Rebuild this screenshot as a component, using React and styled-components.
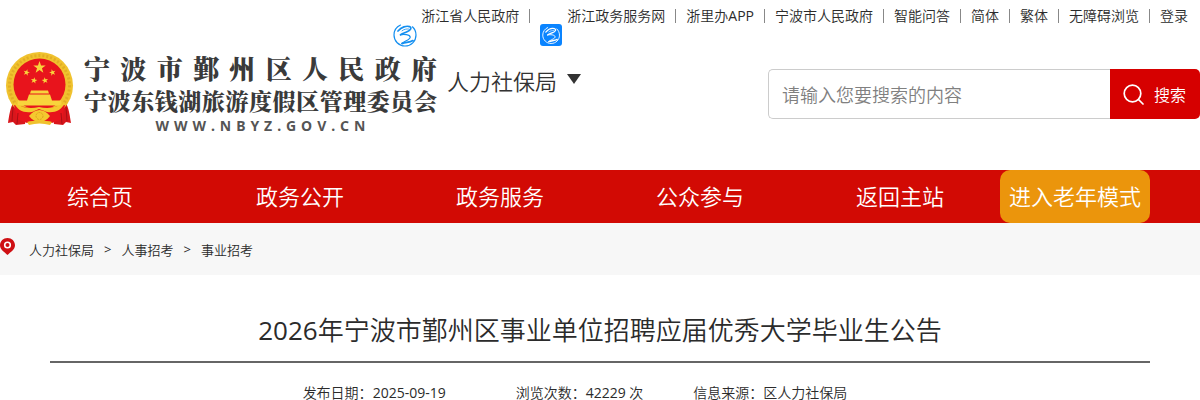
import React from 'react';
import styled, { createGlobalStyle } from 'styled-components';

const GlobalStyle = createGlobalStyle`
    * {
        box-sizing:border-box;
    }
    body {
        margin:0;
        background:#fff;
        color:#2b2b2b;
        font-family:"Open Sans", "Noto Sans CJK SC", sans-serif;
        font-size:14px;
        font-weight:350;
    }
    a {
        color:inherit;
        text-decoration:none;
    }
`;

const TopBar = styled.nav`
    display:flex;
    justify-content:flex-end;
    align-items:flex-start;
    height:47px;
    padding-right:12px;
`;

const TopLink = styled.a`
    display:flex;
    align-items:flex-start;
    line-height:32px;
    white-space:nowrap;
`;

const Divider = styled.span`
    width:1px;
    height:14px;
    margin:9px 10px 0;
    background:#888;
`;

const TopIcon = styled.svg`
    width:${props => props.$size}px;
    height:${props => props.$size}px;
    margin:23px 4px 0 0;
    flex:none;
`;

const Header = styled.header`
    display:flex;
    align-items:flex-start;
    height:123px;
`;

const LogoLink = styled.a`
    display:flex;
    align-items:flex-start;
    padding:4px 0 0 5px;
`;

const EmblemSvg = styled.svg`
    width:69px;
    height:76px;
    margin-right:10px;
`;

const LogoText = styled.span`
    display:flex;
    flex-direction:column;
    width:353px;
    font-family:"Noto Serif CJK SC", "Noto Sans CJK SC", serif;
    font-weight:900;
    color:#3a3a3a;
`;

const LogoRow = styled.span`
    display:flex;
    justify-content:space-between;
    font-size:${props => props.$size}px;
    line-height:${props => props.$line}px;
`;

const LogoSite = styled(LogoRow)`
    width:210px;
    margin:0 auto;
    font-family:"Noto Sans", sans-serif;
    font-weight:700;
    color:#555;
`;

const Department = styled.button`
    display:flex;
    align-items:center;
    gap:10px;
    margin-top:18px;
    padding:0 0 0 10px;
    border:0;
    background:none;
    color:#333;
    font:inherit;
    font-size:22px;
    line-height:32px;
    white-space:nowrap;
`;

const Caret = styled.span`
    border-left:7px solid transparent;
    border-right:7px solid transparent;
    border-top:10px solid #333;
    margin-bottom:4px;
`;

const SearchForm = styled.form`
    display:flex;
    width:36%;
    height:50px;
    margin:22px 0 0 auto;
`;

const SearchInput = styled.input`
    flex:1;
    min-width:0;
    padding:2px 13px 0;
    border:1px solid #ccc;
    border-right:0;
    border-radius:5px 0 0 5px;
    outline:none;
    font:inherit;
    font-size:18px;
    &::placeholder {
        color:#808080;
    }
`;

const SearchButton = styled.button`
    display:flex;
    align-items:center;
    gap:10px;
    padding:0 14px 0 13px;
    border:0;
    border-radius:0 5px 5px 0;
    background:#d60000;
    color:#fff;
    font:inherit;
    font-size:16px;
    white-space:nowrap;
`;

const MainNav = styled.nav`
    display:grid;
    grid-template-columns:repeat(6, 1fr);
    height:53px;
    background:#d20a04;
    color:#fff;
    font-size:22px;
    line-height:53px;
`;

const NavLink = styled.a`
    text-align:center;
    white-space:nowrap;
`;

const ElderButton = styled.button`
    justify-self:start;
    padding:0 9px;
    border:0;
    border-radius:10px;
    background:#eb950c;
    color:#fff;
    font:inherit;
    white-space:nowrap;
`;

const Breadcrumb = styled.nav`
    display:flex;
    align-items:center;
    gap:10px;
    height:52px;
    background:#f7f7f7;
    font-size:13px;
`;

const PinIcon = styled.svg`
    width:15px;
    height:17px;
    margin:0 4px 6px 0;
`;

const Article = styled.main`
    padding:36px 50px 0;
`;

const ArticleTitle = styled.h1`
    margin:0;
    padding-bottom:12px;
    border-bottom:2px solid #666;
    font-size:26px;
    font-weight:350;
    line-height:38px;
    text-align:center;
`;

const Latin = styled.span`
    font-weight:400;
`;

const Meta = styled.div`
    display:flex;
    justify-content:center;
    padding-top:23px;
    line-height:14px;
    white-space:nowrap;
`;

const MetaItem = styled.span`
    margin-right:${props => props.$wide ? 70 : 50}px;
`;

const topLinks = [
    { text: '浙江省人民政府', icon: 'round' },
    { text: '浙江政务服务网', icon: 'square' },
    { text: '浙里办', latin: 'APP' },
    { text: '宁波市人民政府' },
    { text: '智能问答' },
    { text: '简体' },
    { text: '繁体' },
    { text: '无障碍浏览' },
    { text: '登录' },
];

const navLinks = ['综合页', '政务公开', '政务服务', '公众参与', '返回主站'];

const crumbs = ['人力社保局', '人事招考', '事业招考'];

const star = (cx, cy, r, turn = 0) => {
    const points = [];
    for (let i = 0; i < 10; i++) {
        const a = (i * 36 - 90 + turn) * Math.PI / 180;
        const d = i % 2 ? r * 0.4 : r;
        points.push(`${(cx + d * Math.cos(a)).toFixed(2)},${(cy + d * Math.sin(a)).toFixed(2)}`);
    }
    return points.join(' ');
};

const Swirl = () => (
    <g fill="none" stroke="currentColor" strokeLinecap="round">
        <path d="M7.500 2C3.600 3.800 1 7.600 1 12c0 6 4.800 11 11 11s11-4.800 11-11c0-3.400-1.400-6.200-3.600-8.200" strokeWidth="1.200" />
        <path d="M5 8C8.500 4 13.500 2.600 16.500 3.600c3 1.400.5 4-2.500 5.200-3 1.200-5.500 1.600-6.500 3" strokeWidth="1.700" />
        <path d="M9 7.800c2-1.600 4.500-2 6.500-1.800" strokeWidth=".8" />
        <path d="M7.500 11.800c3-.8 9.500-.4 9.700 2.300.2 2.600-5 3.500-8.200 6.200" strokeWidth="1.200" />
        <path d="M9 20.600c3.600-1.600 7.400-.8 11-3" strokeWidth="1.800" />
    </g>
);

const GovIcon = ({ type }) => {
    if (type === 'round') {
        return (
            <TopIcon $size={24} viewBox="0 0 24 24" color="#148ff0">
                <Swirl />
            </TopIcon>
        );
    }
    return (
        <TopIcon $size={23} viewBox="0 0 23 23" color="#fff">
            <rect y="1" width="22" height="22" rx="3" fill="#0a84ff" />
            <g transform="translate(2 3) scale(.76)"><Swirl /></g>
        </TopIcon>
    );
};

const Emblem = () => (
    <EmblemSvg viewBox="0 0 69 76">
        <path d="M9 51C5 56 4 66 3 72l5-1 3 3 9-1 2-14zM60 51c4 5 5 15 6 21l-5-1-3 3-9-1-2-14z" fill="#d9161c" />
        <circle cx="34.500" cy="34.500" r="33.500" fill="#f0c22e" />
        <circle cx="34.500" cy="34.500" r="30" fill="none" stroke="#e2ae24" strokeWidth="3" strokeDasharray="2 2" />
        <circle cx="34.500" cy="33.500" r="26" fill="#e8141c" />
        <g fill="#f8d43c">
            <polygon points={star(34.5, 16.5, 6.5)} />
            <polygon points={star(21.5, 21.5, 3.4, 15)} />
            <polygon points={star(47.5, 21.5, 3.4, -15)} />
            <polygon points={star(29, 29.5, 3.4, 10)} />
            <polygon points={star(40, 29.5, 3.4, -10)} />
            <path d="M26 39.500h17l1 3H25zM24 43.500h21l2 6h9l1 5H12l1-5h9z" />
        </g>
        <path d="M9 54c16 4 35 4 51 0l-3 14-10 4H22l-10-4z" fill="#e8141c" />
        <path d="M9 51c7 6 16 7 25 5 9 2 18 1 26-5-3 9-11 11-18 10l-8-3-7 3c-8 1-15-1-18-10z" fill="#f4c92f" />
        <path d="M24 65c3-4 7-6 10.500-6S42 61 45 65c-3 4-7 6-10.500 6S27 69 24 65z" fill="#f4c92f" />
        <circle cx="34.500" cy="65" r="3.500" fill="none" stroke="#dca51f" strokeWidth="1" strokeDasharray="2 1" />
        <path d="M22 71c6-2 19-2 25 0l-2 3c-7-2-14-2-21 0z" fill="#f0c22e" />
        <path d="M8 56l-1 14M13 62l-1 11M61 56l1 14M56 62l1 11" stroke="#a90f15" strokeWidth="1" />
    </EmblemSvg>
);

const SpreadText = ({ text }) => [...text].map((char, i) => <span key={i}>{char}</span>);

const Logo = () => (
    <LogoLink href="#">
        <Emblem />
        <LogoText>
            <LogoRow $size={26} $line={34}>
                <SpreadText text="宁波市鄞州区人民政府" />
            </LogoRow>
            <LogoRow $size={23} $line={32}>
                <SpreadText text="宁波东钱湖旅游度假区管理委员会" />
            </LogoRow>
            <LogoSite $size={14} $line={18}>
                <SpreadText text="WWW.NBYZ.GOV.CN" />
            </LogoSite>
        </LogoText>
    </LogoLink>
);

const App = () => {
    return (
        <>
            <GlobalStyle />
            <TopBar>
                {topLinks.map((link, i) => (
                    <React.Fragment key={link.text}>
                        {i > 0 && <Divider />}
                        <TopLink href="#">
                            {link.icon && <GovIcon type={link.icon} />}
                            {link.text}
                            {link.latin && <Latin>{link.latin}</Latin>}
                        </TopLink>
                    </React.Fragment>
                ))}
            </TopBar>
            <Header>
                <Logo />
                <Department type="button">
                    人力社保局
                    <Caret />
                </Department>
                <SearchForm>
                    <SearchInput type="text" aria-label="搜索内容" placeholder="请输入您要搜索的内容" />
                    <SearchButton type="submit">
                        <svg width="21" height="21" viewBox="0 0 21 21" fill="none" stroke="#fff" strokeWidth="1.700" strokeLinecap="round">
                            <circle cx="9.500" cy="9.500" r="8.300" />
                            <path d="M15.500 15.500l4.500 4.500" />
                        </svg>
                        搜索
                    </SearchButton>
                </SearchForm>
            </Header>
            <MainNav>
                {navLinks.map(text => <NavLink href="#" key={text}>{text}</NavLink>)}
                <ElderButton type="button">进入老年模式</ElderButton>
            </MainNav>
            <Breadcrumb>
                <PinIcon viewBox="0 0 15 17">
                    <path d="M7.500 0C3.300 0 0 3.200 0 7.200 0 11.500 4.500 14 7.500 17 10.500 14 15 11.500 15 7.200 15 3.200 11.700 0 7.500 0z" fill="#cf1014" />
                    <circle cx="7.500" cy="7" r="2.800" fill="none" stroke="#fff" strokeWidth="1.600" />
                </PinIcon>
                {crumbs.map((text, i) => (
                    <React.Fragment key={text}>
                        {i > 0 && <Latin>&gt;</Latin>}
                        <a href="#">{text}</a>
                    </React.Fragment>
                ))}
            </Breadcrumb>
            <Article>
                <ArticleTitle><Latin>2026</Latin>年宁波市鄞州区事业单位招聘应届优秀大学毕业生公告</ArticleTitle>
                <Meta>
                    <MetaItem $wide>发布日期：<Latin>2025-09-19</Latin></MetaItem>
                    <MetaItem>浏览次数：<Latin>42229</Latin> 次</MetaItem>
                    <MetaItem>信息来源：区人力社保局</MetaItem>
                </Meta>
            </Article>
        </>
    );
};

export default App;
